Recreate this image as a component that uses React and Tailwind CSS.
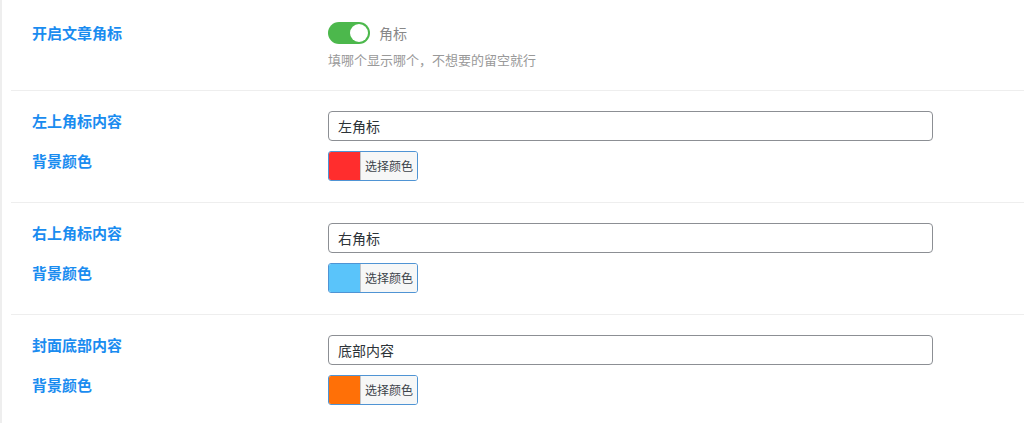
import React from "react";

const font = { fontFamily: '"Noto Sans CJK SC", "Noto Sans", sans-serif' };

function Label({ children }) {
  return (
    <div className="w-[296px] shrink-0 text-[15px] leading-[20px] font-bold text-[#1a8cf0]">
      {children}
    </div>
  );
}

function ColorButton({ color }) {
  return (
    <div className="flex h-[30px] w-[90px] overflow-hidden rounded-[3px] border border-[#4f94d4]">
      <div className="w-[31px] h-full" style={{ backgroundColor: color }} />
      <div className="flex-1 bg-[#f6f7f7] border-l border-[#c3c4c7] flex items-center justify-center text-[12px] text-[#3c434a]">
        选择颜色
      </div>
    </div>
  );
}

function Section({ title, value, color, last }) {
  return (
    <div className={`pl-[21px] pt-[20px] pb-[21px] flex flex-col gap-[10px] ${last ? "" : "border-b border-[#eeeeee]"}`}>
      <div className="flex">
        <Label>{title}</Label>
        <div className="h-[30px] w-[605px] rounded-[4px] border border-[#8c8f94] bg-white flex items-center px-[9px] text-[14px] text-[#2c3338]">
          {value}
        </div>
      </div>
      <div className="flex">
        <Label>背景颜色</Label>
        <ColorButton color={color} />
      </div>
    </div>
  );
}

export default function App() {
  return (
    <div className="w-[1024px] h-[423px] overflow-hidden bg-white" style={font}>
      <div className="h-full border-l-2 border-[#eeeeee] pl-[9px]">
        <div className="pl-[21px] pt-[23px] pb-[20px] border-b border-[#eeeeee] flex">
          <Label>开启文章角标</Label>
          <div className="flex flex-col">
            <div className="flex items-center h-[22px] -mt-[1px]">
              <div className="relative w-[42px] h-[22px] rounded-full bg-[#4cb84c]">
                <div className="absolute right-[2px] top-[2px] w-[18px] h-[18px] rounded-full bg-white" />
              </div>
              <span className="ml-[9px] text-[14px] text-[#888888]">角标</span>
            </div>
            <div className="mt-[6px] text-[13px] leading-[20px] text-[#999999]">
              填哪个显示哪个，不想要的留空就行
            </div>
          </div>
        </div>
        <Section title="左上角标内容" value="左角标" color="#ff2d2d" />
        <Section title="右上角标内容" value="右角标" color="#5ac4fa" />
        <Section title="封面底部内容" value="底部内容" color="#ff7007" last />
      </div>
    </div>
  );
}
